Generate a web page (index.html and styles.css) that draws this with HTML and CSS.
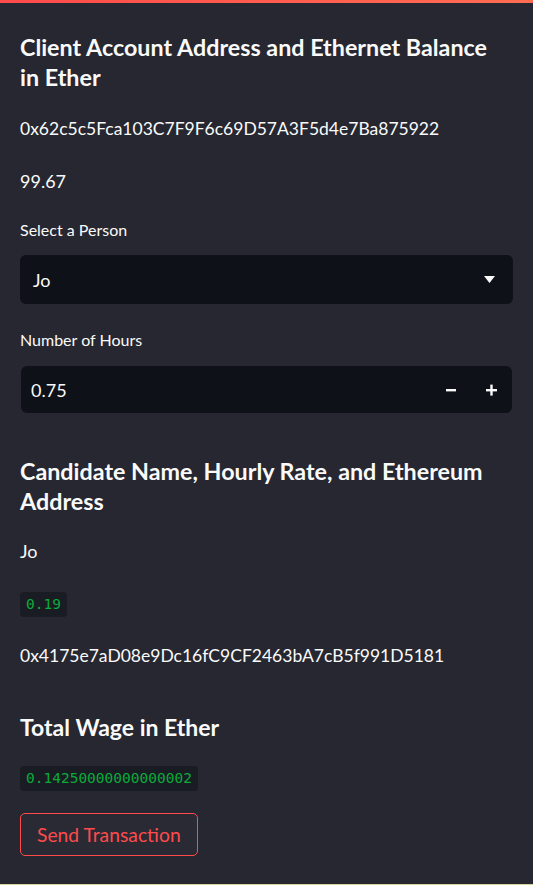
FILE: index.html
```html
<!DOCTYPE html>
<html>
<head>
<meta charset="utf-8">
<link rel="stylesheet" href="styles.css">
</head>
<body>
<div class="decoration"></div>
<main class="main">
  <h3 class="heading heading-1">Client Account Address and Ethernet Balance in Ether</h3>
  <p class="text address-1">0x62c5c5Fca103C7F9F6c69D57A3F5d4e7Ba875922</p>
  <p class="text balance">99.67</p>
  <div class="field">
    <label class="label">Select a Person</label>
    <div class="select">
      <span class="value">Jo</span>
      <svg class="caret" width="11" height="7" viewBox="0 0 11 7"><path d="M0 0h11L5.5 7z" fill="#fafafa"/></svg>
    </div>
  </div>
  <div class="field field-2">
    <label class="label">Number of Hours</label>
    <div class="number">
      <span class="value">0.75</span>
      <div class="steps">
        <svg class="step" width="10" height="12" viewBox="0 0 10 12"><rect x="0" y="5" width="10" height="2.4" fill="#fafafa"/></svg>
        <svg class="step" width="11" height="12" viewBox="0 0 11 12"><rect x="0" y="5" width="11" height="2.4" fill="#fafafa"/><rect x="4.3" y="0.6" width="2.4" height="11" fill="#fafafa"/></svg>
      </div>
    </div>
  </div>
  <h3 class="heading heading-2">Candidate Name, Hourly Rate, and Ethereum Address</h3>
  <p class="text name">Jo</p>
  <p class="code-row rate"><code class="code">0.19</code></p>
  <p class="text address-2">0x4175e7aD08e9Dc16fC9CF2463bA7cB5f991D5181</p>
  <h3 class="heading heading-3">Total Wage in Ether</h3>
  <p class="code-row wage"><code class="code">0.14250000000000002</code></p>
  <button class="button">Send Transaction</button>
</main>
<div class="bottom-line"></div>
</body>
</html>
```
FILE: styles.css
```css
html, body {
  margin: 0;
  padding: 0;
}
body {
  background: #262730;
  color: #fafafa;
  font-family: Lato, "Liberation Sans", sans-serif;
  height: 885px;
  overflow: hidden;
  position: relative;
}
.decoration {
  height: 3px;
  background: linear-gradient(90deg, #ff4b4b, #ff6d52);
}
.main {
  padding: 29px 20px 0 20px;
  display: flex;
  flex-direction: column;
  align-items: flex-start;
}
.heading {
  margin: 0;
  font-size: 23px;
  font-weight: 700;
  line-height: 30px;
}
.heading-1 {
  font-size: 23.3px;
  max-width: 475px;
}
.heading-2 {
  margin-top: 43px;
  font-size: 23.3px;
}
.heading-3 { margin-top: 43px; }
.text {
  margin: 0;
  font-size: 18px;
  line-height: 26px;
}
.address-1, .address-2 { font-size: 17.5px; }
.address-1 { margin-top: 24px; }
.balance { margin-top: 26px; }
.name { margin-top: 22px; }
.address-2 { margin-top: 26px; }
.code-row {
  margin: 0;
  line-height: 0;
}
.rate { margin-top: 28px; }
.wage { margin-top: 24px; }
.field {
  align-self: stretch;
  margin-top: 26px;
}
.field-2 { margin-top: 26px; }
.label {
  display: block;
  font-size: 16px;
  line-height: 20px;
  margin-bottom: 15px;
}
.field-2 .label { margin-bottom: 16px; }
.select, .number {
  background: #0e1117;
  border-radius: 6px;
  display: flex;
  align-items: center;
  justify-content: space-between;
  box-sizing: border-box;
}
.select {
  height: 49px;
  padding: 0 18px 0 13px;
}
.number {
  height: 47px;
  margin: 0 1px;
  padding: 0 15px 0 10px;
}
.value {
  font-size: 18px;
}
.steps {
  display: flex;
  gap: 30px;
  align-items: center;
}
.code {
  display: inline-block;
  background: #1a1c24;
  color: #09ab3b;
  font-family: "DejaVu Sans Mono", monospace;
  font-size: 14.5px;
  line-height: 25px;
  padding: 0 6px;
  border-radius: 4px;
}
.button {
  margin-top: 22px;
  background: #292a34;
  border: 1px solid #ff4b4b;
  color: #ff4b4b;
  border-radius: 5px;
  font-family: Lato, "Liberation Sans", sans-serif;
  font-size: 19.3px;
  padding: 0 16px;
  height: 43px;
}
.bottom-line {
  position: absolute;
  left: 0;
  right: 0;
  bottom: 0;
  height: 1px;
  background: #d8d49c;
}
```
